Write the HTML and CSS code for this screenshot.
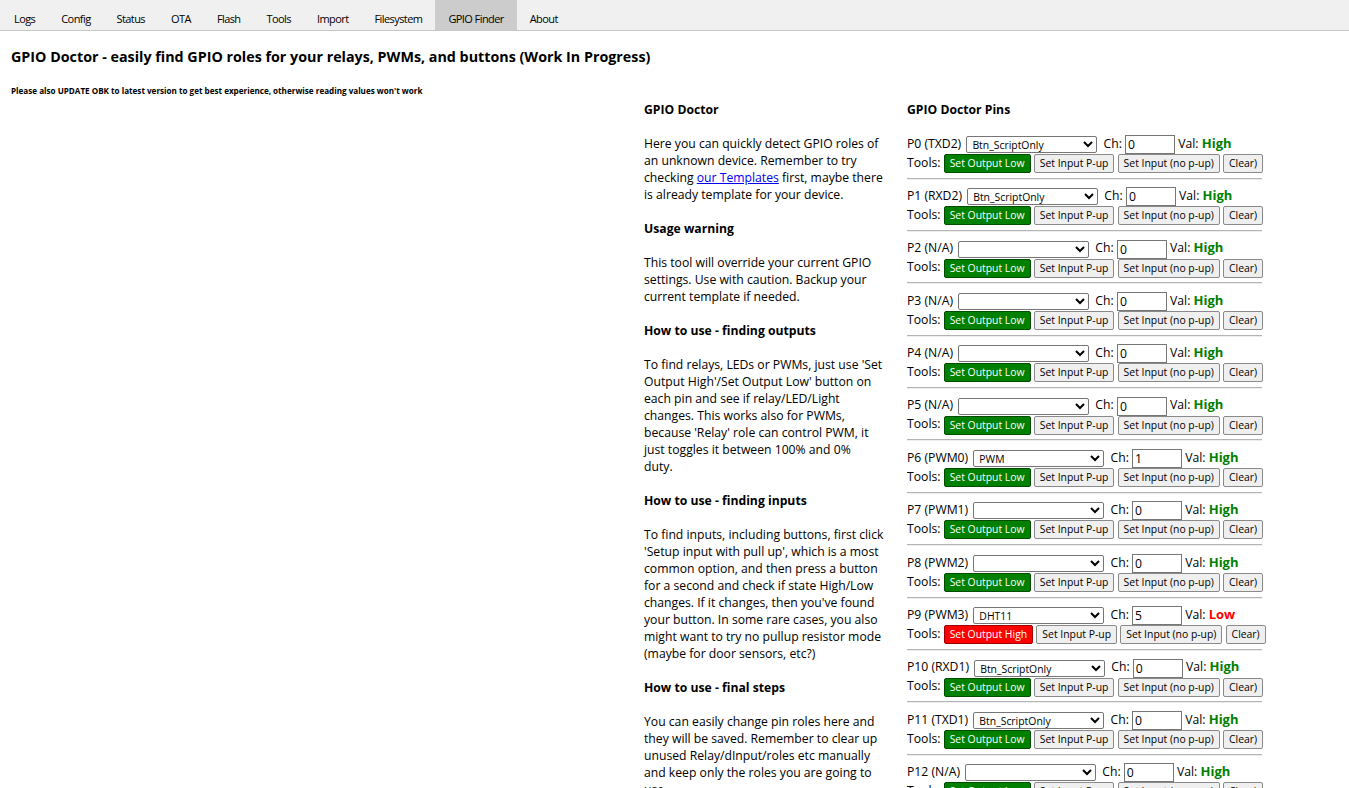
FILE: index.html
```html
<!DOCTYPE html>
<html>
<head>
<meta charset="utf-8">
<title>GPIO Finder</title>
<link rel="stylesheet" href="styles.css">
</head>
<body>
<nav class="tabs">
  <span class="tab">Logs</span>
  <span class="tab">Config</span>
  <span class="tab">Status</span>
  <span class="tab">OTA</span>
  <span class="tab">Flash</span>
  <span class="tab">Tools</span>
  <span class="tab">Import</span>
  <span class="tab">Filesystem</span>
  <span class="tab active">GPIO Finder</span>
  <span class="tab">About</span>
</nav>
<main class="page">
  <h3 class="title">GPIO Doctor - easily find GPIO roles for your relays, PWMs, and buttons (Work In Progress)</h3>
  <h6 class="note">Please also UPDATE OBK to latest version to get best experience, otherwise reading values won't work</h6>
  <div class="columns">
    <div class="col-left"></div>
    <div class="col-help">
      <h4>GPIO Doctor</h4>
      <p>Here you can quickly detect GPIO roles of an unknown device. Remember to try checking <a href="#">our Templates</a> first, maybe there is already template for your device.</p>
      <h4>Usage warning</h4>
      <p>This tool will override your current GPIO settings. Use with caution. Backup your current template if needed.</p>
      <h4>How to use - finding outputs</h4>
      <p>To find relays, LEDs or PWMs, just use 'Set Output High'/Set Output Low' button on each pin and see if relay/LED/Light changes. This works also for PWMs, because 'Relay' role can control PWM, it just toggles it between 100% and 0%<br>duty.</p>
      <h4>How to use - finding inputs</h4>
      <p>To find inputs, including buttons, first click 'Setup input with pull up', which is a most common option, and then press a button for a second and check if state High/Low changes. If it changes, then you've found your button. In some rare cases, you also might want to try no pullup resistor mode (maybe for door sensors, etc?)</p>
      <h4>How to use - final steps</h4>
      <p>You can easily change pin roles here and they will be saved. Remember to clear up unused Relay/dInput/roles etc manually and keep only the roles you are going to use.</p>
    </div>
    <div class="col-pins">
      <h4>GPIO Doctor Pins</h4>

      <div class="pin">
        <div class="line">P0 (TXD2) <select><option>Btn_ScriptOnly</option><option></option><option>PWM</option><option>DHT11</option></select> Ch: <input type="text" value="0"> Val: <b class="high">High</b></div>
        <div class="line">Tools: <button class="btn out-low">Set Output Low</button> <button class="btn">Set Input P-up</button> <button class="btn">Set Input (no p-up)</button> <button class="btn">Clear)</button></div>
        <hr>
      </div>

      <div class="pin">
        <div class="line">P1 (RXD2) <select><option>Btn_ScriptOnly</option><option></option><option>PWM</option><option>DHT11</option></select> Ch: <input type="text" value="0"> Val: <b class="high">High</b></div>
        <div class="line">Tools: <button class="btn out-low">Set Output Low</button> <button class="btn">Set Input P-up</button> <button class="btn">Set Input (no p-up)</button> <button class="btn">Clear)</button></div>
        <hr>
      </div>

      <div class="pin">
        <div class="line">P2 (N/A) <select><option></option><option>Btn_ScriptOnly</option><option>PWM</option><option>DHT11</option></select> Ch: <input type="text" value="0"> Val: <b class="high">High</b></div>
        <div class="line">Tools: <button class="btn out-low">Set Output Low</button> <button class="btn">Set Input P-up</button> <button class="btn">Set Input (no p-up)</button> <button class="btn">Clear)</button></div>
        <hr>
      </div>

      <div class="pin">
        <div class="line">P3 (N/A) <select><option></option><option>Btn_ScriptOnly</option><option>PWM</option><option>DHT11</option></select> Ch: <input type="text" value="0"> Val: <b class="high">High</b></div>
        <div class="line">Tools: <button class="btn out-low">Set Output Low</button> <button class="btn">Set Input P-up</button> <button class="btn">Set Input (no p-up)</button> <button class="btn">Clear)</button></div>
        <hr>
      </div>

      <div class="pin">
        <div class="line">P4 (N/A) <select><option></option><option>Btn_ScriptOnly</option><option>PWM</option><option>DHT11</option></select> Ch: <input type="text" value="0"> Val: <b class="high">High</b></div>
        <div class="line">Tools: <button class="btn out-low">Set Output Low</button> <button class="btn">Set Input P-up</button> <button class="btn">Set Input (no p-up)</button> <button class="btn">Clear)</button></div>
        <hr>
      </div>

      <div class="pin">
        <div class="line">P5 (N/A) <select><option></option><option>Btn_ScriptOnly</option><option>PWM</option><option>DHT11</option></select> Ch: <input type="text" value="0"> Val: <b class="high">High</b></div>
        <div class="line">Tools: <button class="btn out-low">Set Output Low</button> <button class="btn">Set Input P-up</button> <button class="btn">Set Input (no p-up)</button> <button class="btn">Clear)</button></div>
        <hr>
      </div>

      <div class="pin">
        <div class="line">P6 (PWM0) <select><option>PWM</option><option></option><option>Btn_ScriptOnly</option><option>DHT11</option></select> Ch: <input type="text" value="1"> Val: <b class="high">High</b></div>
        <div class="line">Tools: <button class="btn out-low">Set Output Low</button> <button class="btn">Set Input P-up</button> <button class="btn">Set Input (no p-up)</button> <button class="btn">Clear)</button></div>
        <hr>
      </div>

      <div class="pin">
        <div class="line">P7 (PWM1) <select><option></option><option>Btn_ScriptOnly</option><option>PWM</option><option>DHT11</option></select> Ch: <input type="text" value="0"> Val: <b class="high">High</b></div>
        <div class="line">Tools: <button class="btn out-low">Set Output Low</button> <button class="btn">Set Input P-up</button> <button class="btn">Set Input (no p-up)</button> <button class="btn">Clear)</button></div>
        <hr>
      </div>

      <div class="pin">
        <div class="line">P8 (PWM2) <select><option></option><option>Btn_ScriptOnly</option><option>PWM</option><option>DHT11</option></select> Ch: <input type="text" value="0"> Val: <b class="high">High</b></div>
        <div class="line">Tools: <button class="btn out-low">Set Output Low</button> <button class="btn">Set Input P-up</button> <button class="btn">Set Input (no p-up)</button> <button class="btn">Clear)</button></div>
        <hr>
      </div>

      <div class="pin">
        <div class="line">P9 (PWM3) <select><option>DHT11</option><option></option><option>Btn_ScriptOnly</option><option>PWM</option></select> Ch: <input type="text" value="5"> Val: <b class="low">Low</b></div>
        <div class="line">Tools: <button class="btn out-high">Set Output High</button> <button class="btn">Set Input P-up</button> <button class="btn">Set Input (no p-up)</button> <button class="btn">Clear)</button></div>
        <hr>
      </div>

      <div class="pin">
        <div class="line">P10 (RXD1) <select><option>Btn_ScriptOnly</option><option></option><option>PWM</option><option>DHT11</option></select> Ch: <input type="text" value="0"> Val: <b class="high">High</b></div>
        <div class="line">Tools: <button class="btn out-low">Set Output Low</button> <button class="btn">Set Input P-up</button> <button class="btn">Set Input (no p-up)</button> <button class="btn">Clear)</button></div>
        <hr>
      </div>

      <div class="pin">
        <div class="line">P11 (TXD1) <select><option>Btn_ScriptOnly</option><option></option><option>PWM</option><option>DHT11</option></select> Ch: <input type="text" value="0"> Val: <b class="high">High</b></div>
        <div class="line">Tools: <button class="btn out-low">Set Output Low</button> <button class="btn">Set Input P-up</button> <button class="btn">Set Input (no p-up)</button> <button class="btn">Clear)</button></div>
        <hr>
      </div>

      <div class="pin">
        <div class="line">P12 (N/A) <select><option></option><option>Btn_ScriptOnly</option><option>PWM</option><option>DHT11</option></select> Ch: <input type="text" value="0"> Val: <b class="high">High</b></div>
        <div class="line">Tools: <button class="btn out-low">Set Output Low</button> <button class="btn">Set Input P-up</button> <button class="btn">Set Input (no p-up)</button> <button class="btn">Clear)</button></div>
        <hr>
      </div>
    </div>
  </div>
</main>
</body>
</html>
```

FILE: styles.css
```css
html, body {
  margin: 0;
  padding: 0;
  background: #ffffff;
}

body {
  font-family: "Open Sans", "Noto Sans", sans-serif;
  font-size: 12.2px;
  color: #000;
}

.tabs {
  display: flex;
  height: 30px;
  background: #f0f0f0;
  border-bottom: 1px solid #c8c8c8;
  padding-left: 1px;
}

.tab {
  box-sizing: border-box;
  height: 30px;
  padding: 10px 13px 0;
  line-height: 17px;
  font-size: 11px;
  letter-spacing: -0.58px;
  color: #000;
  white-space: nowrap;
}

.tab.active {
  background: #cccccc;
}

.page {
  padding: 0 11px;
}

.title {
  margin: 16px 0 0;
  font-size: 14.3px;
  line-height: 20px;
  font-weight: 700;
}

.note {
  margin: 18px 0 0;
  font-size: 8.1px;
  line-height: 12px;
  font-weight: 700;
}

.columns {
  display: grid;
  grid-template-columns: 633px 263px 355px;
  padding-top: 3.5px;
}

.col-help {
  box-sizing: border-box;
  padding-right: 22px;
}

.col-help h4,
.col-pins h4 {
  margin: 0 0 17px;
  font-size: 12.2px;
  line-height: 17px;
  font-weight: 700;
}

.col-pins h4 {
  margin-bottom: 16px;
}

.col-help p {
  margin: 0 0 17px;
  line-height: 17px;
}

.col-help a {
  color: #0000ee;
  text-decoration: underline;
}

.pin .line {
  height: 19px;
  line-height: 19px;
  white-space: nowrap;
}

.pin select {
  box-sizing: border-box;
  width: 131px;
  height: 17px;
  margin: 0 3px 0 2px;
  font-family: "Open Sans", "Noto Sans", sans-serif;
  font-size: 10.4px;
  padding: 0 1px;
  border: 1px solid #767676;
  border-radius: 2px;
  background: #fff;
  color: #000;
  vertical-align: middle;
}

.pin input {
  box-sizing: border-box;
  width: 50px;
  height: 19px;
  padding: 0 2px;
  font-family: "Open Sans", "Noto Sans", sans-serif;
  font-size: 12.2px;
  border: 1px solid #767676;
  border-radius: 0;
  vertical-align: middle;
}

.btn {
  box-sizing: border-box;
  height: 19px;
  padding: 0 5px;
  font-family: "Open Sans", "Noto Sans", sans-serif;
  font-size: 10.4px;
  line-height: 17px;
  color: #000;
  background: #efefef;
  border: 1px solid #8a8a8a;
  border-radius: 2px;
  vertical-align: middle;
}

.btn.out-low {
  background: #008000;
  color: #fff;
  border-color: #004d00;
}

.btn.out-high {
  background: #ff0000;
  color: #fff;
  border-color: #a00000;
}

.high {
  color: #008000;
  font-size: 13px;
}

.low {
  color: #ff0000;
  font-size: 13px;
}

.pin hr {
  height: 0;
  margin: 6px 0 6.4px;
  border: 0;
  border-top: 1px solid #b4b4b4;
  border-bottom: 1px solid #eeeeee;
}
```
